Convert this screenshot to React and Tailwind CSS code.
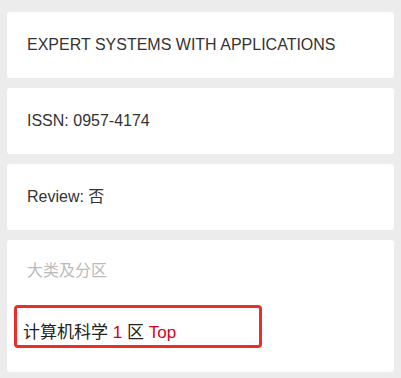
const rows = ['EXPERT SYSTEMS WITH APPLICATIONS', 'ISSN: 0957-4174', 'Review: 否'];

export default function App() {
  return (
    <div
      className="min-h-[378px] w-[401px] bg-[#ececec] px-[7px] pt-[12px] pb-[7px] text-[16px] text-[#333]"
      style={{ fontFamily: '"Liberation Sans", Arial, "Noto Sans CJK SC", sans-serif' }}
    >
      <div className="flex flex-col gap-[10px]">
        {rows.map((text) => (
          <div key={text} className="flex h-[66px] items-center rounded-[3px] bg-white px-5">
            {text}
          </div>
        ))}

        <div className="h-[132px] rounded-[3px] bg-white pt-[19px]">
          <div className="pl-5 leading-6 text-[#bbb]">大类及分区</div>
          <div className="mt-[22px] ml-[7px] h-[43px] w-[248px] rounded-[4px] border-[3px] border-[#e8302a] pl-[6px] pt-[15px] text-[17px] leading-5 text-[#222]">
            计算机科学 <span className="text-[#d0021b]">1</span> 区{' '}
            <span className="text-[#d0021b]">Top</span>
          </div>
        </div>
      </div>
    </div>
  );
}
